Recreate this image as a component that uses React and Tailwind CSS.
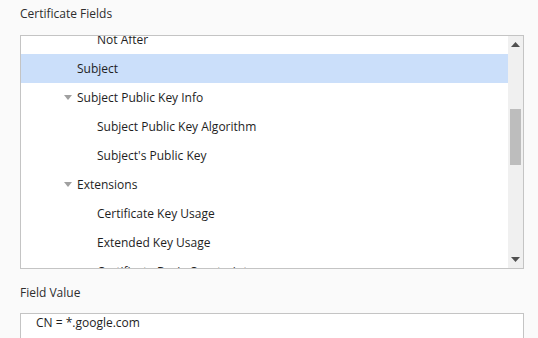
import React from 'react';

const rows = [
  { label: 'Not After', level: 2 },
  { label: 'Subject', level: 1, selected: true },
  { label: 'Subject Public Key Info', level: 1, open: true },
  { label: 'Subject Public Key Algorithm', level: 2 },
  { label: "Subject's Public Key", level: 2 },
  { label: 'Extensions', level: 1, open: true },
  { label: 'Certificate Key Usage', level: 2 },
  { label: 'Extended Key Usage', level: 2 },
  { label: 'Certificate Basic Constraints', level: 2 },
];

function Caret() {
  return (
    <svg width="8" height="5" viewBox="0 0 8 5" className="mr-[5px]">
      <path d="M0 0 L8 0 L4 5 Z" fill="#a0a0a0" />
    </svg>
  );
}

function TreeRow({ row }) {
  return (
    <div
      className={
        'h-[29px] flex items-center shrink-0 ' +
        (row.selected ? 'bg-[#cbdffa]' : '')
      }
    >
      {row.level === 2 ? (
        <span className="pl-[76px]">{row.label}</span>
      ) : row.open ? (
        <span className="pl-[43px] flex items-center">
          <Caret />
          {row.label}
        </span>
      ) : (
        <span className="pl-[56px]">{row.label}</span>
      )}
    </div>
  );
}

export default function App() {
  return (
    <div
      className="w-[538px] h-[338px] overflow-hidden bg-[#fafafa] text-[12px] text-[#1e1e1e]"
      style={{ fontFamily: '"Open Sans", "Noto Sans", sans-serif' }}
    >
      <div className="pt-[5px] pl-[20px] h-[35px] leading-[17px] text-[#2e2e2e]">Certificate Fields</div>

      <div className="ml-[20px] w-[504px] h-[234px] border border-[#c4c4c4] bg-white flex">
        <div className="flex-1 overflow-hidden">
          <div className="flex flex-col -mt-[11px]">
            {rows.map((r) => (
              <TreeRow key={r.label} row={r} />
            ))}
          </div>
        </div>
        <div className="w-[15px] bg-[#f0f0f0] flex flex-col items-center">
          <svg width="9" height="5" viewBox="0 0 9 5" className="mt-[6px]">
            <path d="M4.5 0 L9 5 L0 5 Z" fill="#505050" />
          </svg>
          <div className="w-[11px] h-[56px] bg-[#bdbdbd] mt-[62px]" />
          <div className="flex-1" />
          <svg width="9" height="5" viewBox="0 0 9 5" className="mb-[6px]">
            <path d="M0 0 L9 0 L4.5 5 Z" fill="#505050" />
          </svg>
        </div>
      </div>

      <div className="pt-[15px] pl-[20px] h-[44px] leading-[17px] text-[#2e2e2e]">Field Value</div>

      <div className="ml-[20px] w-[504px] h-[60px] border border-[#c4c4c4] bg-white">
        <div className="pl-[15px] pt-[1px] leading-[16px]">CN = *.google.com</div>
      </div>
    </div>
  );
}
